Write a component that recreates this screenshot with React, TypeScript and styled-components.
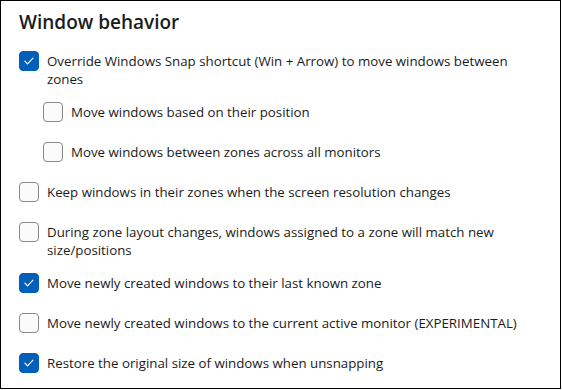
import React from "react";
import styled, { createGlobalStyle } from "styled-components";

const Global = createGlobalStyle`
  html, body { margin: 0; padding: 0; background: #ffffff; }
  body { font-family: "Open Sans", "Noto Sans", sans-serif; }
`;

const Frame = styled.div`
  box-sizing: border-box;
  width: 561px;
  height: 389px;
  border: 1px solid #000000;
  background: #ffffff;
  padding: 7px 30px 0 18px;
  display: flex;
  flex-direction: column;
  color: #1b1b1b;
`;

const Title = styled.h2`
  margin: 0 0 9px 0;
  font-family: "Open Sans", "Noto Sans", sans-serif;
  font-weight: 600;
  font-size: 19px;
  line-height: 28px;
  color: #1b1b1b;
`;

const List = styled.div`
  display: flex;
  flex-direction: column;
  gap: 8px;
`;

const Row = styled.label<{ $nested?: boolean }>`
  display: flex;
  align-items: flex-start;
  gap: 8px;
  min-height: 32px;
  padding-left: ${(p) => (p.$nested ? "24px" : "0")};
`;

const Box = styled.span<{ $checked?: boolean }>`
  flex: none;
  box-sizing: border-box;
  width: 20px;
  height: 20px;
  margin-top: 6px;
  border-radius: 4px;
  border: 1px solid ${(p) => (p.$checked ? "#005fb8" : "#8a8a8a")};
  background: ${(p) => (p.$checked ? "#005fb8" : "#fbfbfb")};
  display: flex;
  align-items: center;
  justify-content: center;
`;

const Text = styled.span`
  padding-top: 7px;
  font-size: 13.3px;
  line-height: 18px;
  color: #1b1b1b;
`;

const Check = () => (
  <svg width="20" height="20" viewBox="0 0 20 20" style={{ display: "block" }}>
    <path
      d="M5.4 10.2 L8.4 13.2 L14.4 6.8"
      fill="none"
      stroke="#ffffff"
      strokeWidth="1.3"
      strokeLinecap="round"
      strokeLinejoin="round"
    />
  </svg>
);

const items: { text: string; checked: boolean; nested?: boolean }[] = [
  { text: "Override Windows Snap shortcut (Win + Arrow) to move windows between zones", checked: true },
  { text: "Move windows based on their position", checked: false, nested: true },
  { text: "Move windows between zones across all monitors", checked: false, nested: true },
  { text: "Keep windows in their zones when the screen resolution changes", checked: false },
  { text: "During zone layout changes, windows assigned to a zone will match new size/positions", checked: false },
  { text: "Move newly created windows to their last known zone", checked: true },
  { text: "Move newly created windows to the current active monitor (EXPERIMENTAL)", checked: false },
  { text: "Restore the original size of windows when unsnapping", checked: true },
];

export default function App() {
  return (
    <>
      <Global />
      <Frame>
        <Title>Window behavior</Title>
        <List>
          {items.map((it) => (
            <Row key={it.text} $nested={it.nested}>
              <Box $checked={it.checked}>{it.checked && <Check />}</Box>
              <Text>{it.text}</Text>
            </Row>
          ))}
        </List>
      </Frame>
    </>
  );
}
